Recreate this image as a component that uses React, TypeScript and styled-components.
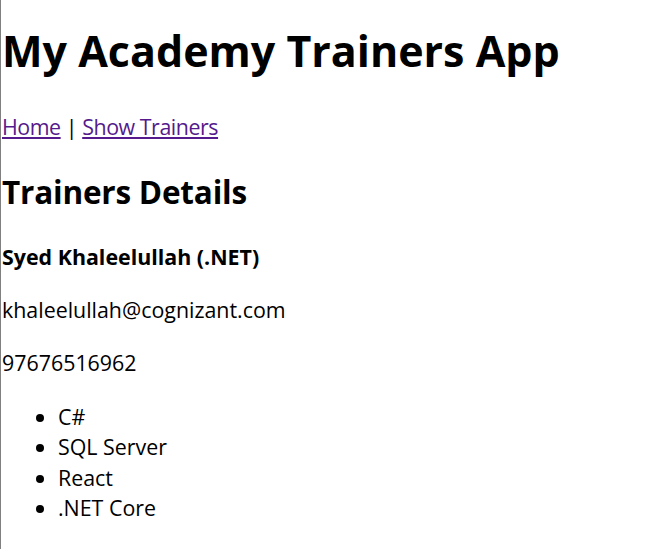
import styled, { createGlobalStyle } from "styled-components";

const GlobalStyle = createGlobalStyle`
  body {
    margin: 0;
    background: #ffffff;
    color: #000000;
    font-family: "Open Sans", "Noto Sans", sans-serif;
  }
`;

const Page = styled.div`
  display: flow-root;
  min-height: 100vh;
  box-sizing: border-box;
  padding-left: 1px;
  border-left: 1px solid #808080;
`;

const Title = styled.h1`
  margin: 21px 0 0;
  font-size: 43px;
  line-height: 60px;
  font-weight: 700;
`;

const Nav = styled.p`
  margin: 31px 0 0;
  font-size: 21.4px;
  line-height: 30px;
  letter-spacing: -0.45px;
`;

const NavLink = styled.a`
  color: #551a8b;
  text-decoration: underline;
`;

const SubTitle = styled.h2`
  margin: 27px 0 0;
  font-size: 31.5px;
  line-height: 45px;
  font-weight: 700;
  letter-spacing: -0.2px;
`;

const Name = styled.h4`
  margin: 28px 0 0;
  font-size: 21.4px;
  line-height: 30px;
  font-weight: 700;
`;

const Info = styled.p`
  margin: 23px 0 0;
  font-size: 21.4px;
  line-height: 30px;
`;

const Skills = styled.ul`
  margin: 24px 0 0;
  padding-left: 56px;
  font-size: 21.4px;
  line-height: 30.3px;
`;

type Trainer = {
  name: string;
  email: string;
  phone: string;
  technology: string;
  skills: string[];
};

const trainer: Trainer = {
  name: "Syed Khaleelullah",
  email: "khaleelullah@cognizant.com",
  phone: "97676516962",
  technology: ".NET",
  skills: ["C#", "SQL Server", "React", ".NET Core"],
};

export default function App() {
  return (
    <>
      <GlobalStyle />
      <Page>
        <Title>My Academy Trainers App</Title>
        <Nav>
          <NavLink href="#home">Home</NavLink> |{" "}
          <NavLink href="#trainers">Show Trainers</NavLink>
        </Nav>
        <SubTitle>Trainers Details</SubTitle>
        <Name>
          {trainer.name} ({trainer.technology})
        </Name>
        <Info>{trainer.email}</Info>
        <Info>{trainer.phone}</Info>
        <Skills>
          {trainer.skills.map((skill) => (
            <li key={skill}>{skill}</li>
          ))}
        </Skills>
      </Page>
    </>
  );
}
